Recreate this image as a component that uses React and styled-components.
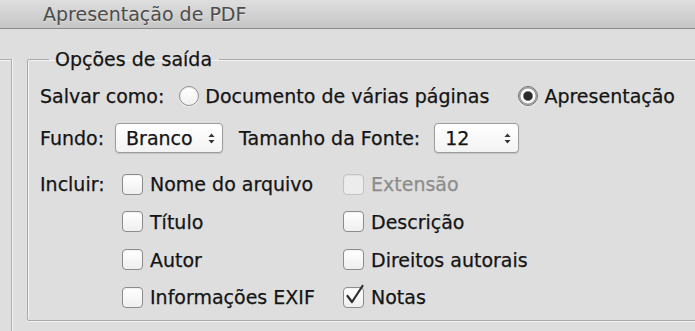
import React from 'react';
import styled, {createGlobalStyle} from 'styled-components';

const GlobalStyle = createGlobalStyle`
  html, body {
    margin: 0;
    padding: 0;
    background: #dedede;
  }
  body {
    font-family: "DejaVu Sans", "Liberation Sans", sans-serif;
    color: #141414;
    -webkit-text-stroke: 0.25px currentColor;
  }
`

const Window = styled.div`
  width: 695px;
  height: 331px;
  overflow: hidden;
  display: flex;
  flex-direction: column;
  background: #dedede;
`

const TitleBar = styled.header`
  height: 28px;
  flex-shrink: 0;
  display: flex;
  align-items: center;
  padding-left: 43px;
  background: linear-gradient(#dedede, #c6c6c6);
  border-bottom: 1px solid #8b8b8b;
  font-size: 19px;
  color: #4c4c4c;
  text-shadow: 0 1px 0 rgba(255, 255, 255, 0.45);
  -webkit-text-stroke: 0;
`

const Body = styled.div`
  flex: 1;
  display: flex;
  padding-top: 30px;
`

const SideRail = styled.div`
  width: 11px;
  flex-shrink: 0;
  border-top: 1px solid #adadad;
  border-right: 1px solid #adadad;
  box-shadow: inset 0 1px 0 #f4f4f4, 1px 0 0 #f4f4f4;
`

const Group = styled.fieldset`
  margin: -10px 0 0 15px;
  padding: 0 0 7px 12px;
  min-width: 720px;
  height: 272px;
  box-sizing: border-box;
  border: 1px solid #a8a8a8;
  border-radius: 2px;
  box-shadow: inset 1px 1px 0 #f4f4f4, 0 1px 0 #f4f4f4;
`

const Legend = styled.legend`
  margin-left: 9px;
  padding: 0 7px 0 6px;
  font-size: 19px;
  line-height: 20px;
`

const Row = styled.div`
  display: flex;
  align-items: center;
  height: 30px;
  margin-top: ${({$top}) => $top}px;
  font-size: 19px;
`

const FieldLabel = styled.span`
  margin-right: ${({$gap}) => $gap || 0}px;
  white-space: nowrap;
`

const Option = styled.label`
  display: flex;
  align-items: center;
  gap: 6px;
  margin-right: 29px;
  white-space: nowrap;
`

const RadioDot = styled.span`
  width: 20px;
  height: 20px;
  box-sizing: border-box;
  border-radius: 50%;
  border: 1px solid ${({$on}) => ($on ? '#6d6d6d' : '#8e8e8e')};
  background: ${({$on}) => ($on ? 'radial-gradient(circle, #2a2a2a 0 4px, #777 4.5px, #fdfdfd 5.5px, #f0f0f0 100%)' : 'linear-gradient(#ffffff, #f1f1f1)')};
  box-shadow: ${({$on}) => ($on ? 'inset 0 0 0 1.5px #9a9a9a' : 'inset 0 1px 1px rgba(0,0,0,0.08)')}, 0 1px 0 rgba(255,255,255,0.6);
`

const Select = styled.div`
  display: flex;
  align-items: center;
  justify-content: space-between;
  width: ${({$width}) => $width}px;
  height: 30px;
  box-sizing: border-box;
  padding: 0 7px 0 10px;
  margin-right: ${({$gap}) => $gap || 0}px;
  border: 1px solid #9c9c9c;
  border-radius: 4px;
  background: linear-gradient(#ffffff, #f3f3f3);
  box-shadow: 0 1px 1px rgba(0, 0, 0, 0.12);
`

const CheckGrid = styled.div`
  display: grid;
  grid-template-columns: 82px 221px auto;
  grid-auto-rows: 30px;
  row-gap: 7.8px;
  margin-top: 16px;
  font-size: 19px;
  align-items: center;
`

const Check = styled.label`
  grid-column: ${({$col}) => $col};
  display: flex;
  align-items: center;
  gap: 7px;
  white-space: nowrap;
  color: ${({$disabled}) => ($disabled ? '#8c8c8c' : 'inherit')};
`

const Box = styled.span`
  position: relative;
  width: 21px;
  height: 21px;
  box-sizing: border-box;
  border-radius: 4px;
  border: 1px solid ${({$disabled}) => ($disabled ? '#c2c2c2' : '#8c8c8c')};
  background: ${({$disabled}) => ($disabled ? '#ececec' : 'linear-gradient(#ffffff, #efefef)')};
  box-shadow: inset 0 1px 1px rgba(0, 0, 0, 0.06);

  svg {
    position: absolute;
    left: 2px;
    top: -3px;
    overflow: visible;
  }
`

const Arrows = () => (
  <svg width="7" height="11" viewBox="0 0 7 11">
    <path d="M3.5 0.5 L6.5 4 L0.5 4 Z" fill="#333"/>
    <path d="M3.5 10.5 L6.5 7 L0.5 7 Z" fill="#333"/>
  </svg>
)

const Tick = () => (
  <svg width="18" height="20" viewBox="0 0 18 20">
    <path d="M1.5 11 L6 17 L16.5 1" fill="none" stroke="#2b2b2b" strokeWidth="2.2" strokeLinecap="round" strokeLinejoin="round"/>
  </svg>
)

function CheckItem({col, label, checked, disabled}) {
  return (
    <Check $col={col} $disabled={disabled}>
      <Box $disabled={disabled}>{checked && <Tick/>}</Box>
      {label}
    </Check>
  )
}

export default function App() {
  return (
    <Window>
      <GlobalStyle/>
      <TitleBar>Apresentação de PDF</TitleBar>
      <Body>
        <SideRail/>
        <Group>
          <Legend>Opções de saída</Legend>
          <Row $top={12}>
            <FieldLabel $gap={15}>Salvar como:</FieldLabel>
            <Option><RadioDot/>Documento de várias páginas</Option>
            <Option><RadioDot $on/>Apresentação</Option>
          </Row>
          <Row $top={12}>
            <FieldLabel $gap={11}>Fundo:</FieldLabel>
            <Select $width={108} $gap={16}>Branco<Arrows/></Select>
            <FieldLabel $gap={14}>Tamanho da Fonte:</FieldLabel>
            <Select $width={85}>12<Arrows/></Select>
          </Row>
          <CheckGrid>
            <FieldLabel>Incluir:</FieldLabel>
            <CheckItem col={2} label="Nome do arquivo"/>
            <CheckItem col={3} label="Extensão" disabled/>
            <CheckItem col={2} label="Título"/>
            <CheckItem col={3} label="Descrição"/>
            <CheckItem col={2} label="Autor"/>
            <CheckItem col={3} label="Direitos autorais"/>
            <CheckItem col={2} label="Informações EXIF"/>
            <CheckItem col={3} label="Notas" checked/>
          </CheckGrid>
        </Group>
      </Body>
    </Window>
  );
}
